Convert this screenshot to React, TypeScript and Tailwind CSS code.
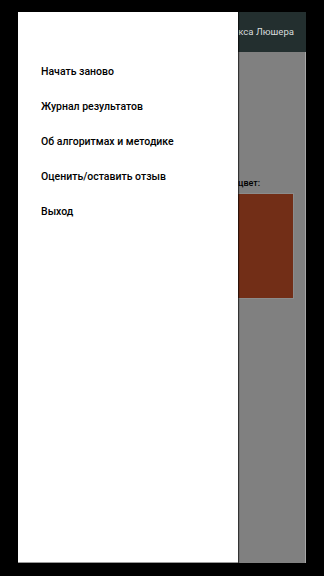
import React from "react";

const items = [
  "Начать заново",
  "Журнал результатов",
  "Об алгоритмах и методике",
  "Оценить/оставить отзыв",
  "Выход",
];

export default function App() {
  return (
    <div
      className="w-[324px] h-[576px] bg-black pt-[12px] pl-[18px]"
      style={{ fontFamily: "Roboto, 'Noto Sans', sans-serif" }}
    >
      <div className="flex w-[288px] h-[551px] overflow-hidden bg-[#808080]">
        <div className="relative z-10 w-[220px] shrink-0 bg-white border-b border-[#9a9a9a] shadow-[1px_0_1px_rgba(0,0,0,0.6)]">
          <div className="pt-[42px] pl-[23px] flex flex-col">
            {items.map((t) => (
              <div
                key={t}
                className="h-[35px] flex items-center text-[10.5px] font-medium text-black"
              >
                {t}
              </div>
            ))}
          </div>
        </div>
        <div className="flex-1 flex flex-col overflow-hidden">
          <div className="h-[40px] bg-[#232f2f] flex items-center justify-end pr-[12px] shrink-0">
            <span className="text-[9.6px] text-[#d8dcdc] whitespace-nowrap">кса Люшера</span>
          </div>
          <div className="flex-1 flex flex-col border-r border-[#a6a6a6]">
            <div className="h-[124px]" />
            <div className="text-[9px] font-medium text-black leading-[14px] whitespace-nowrap">
              цвет:
            </div>
            <div className="h-[3px]" />
            <div className="mr-[11px] h-[106px] bg-[#722e17] border border-l-0 border-[#8c8c8c]" />
          </div>
        </div>
      </div>
    </div>
  );
}
